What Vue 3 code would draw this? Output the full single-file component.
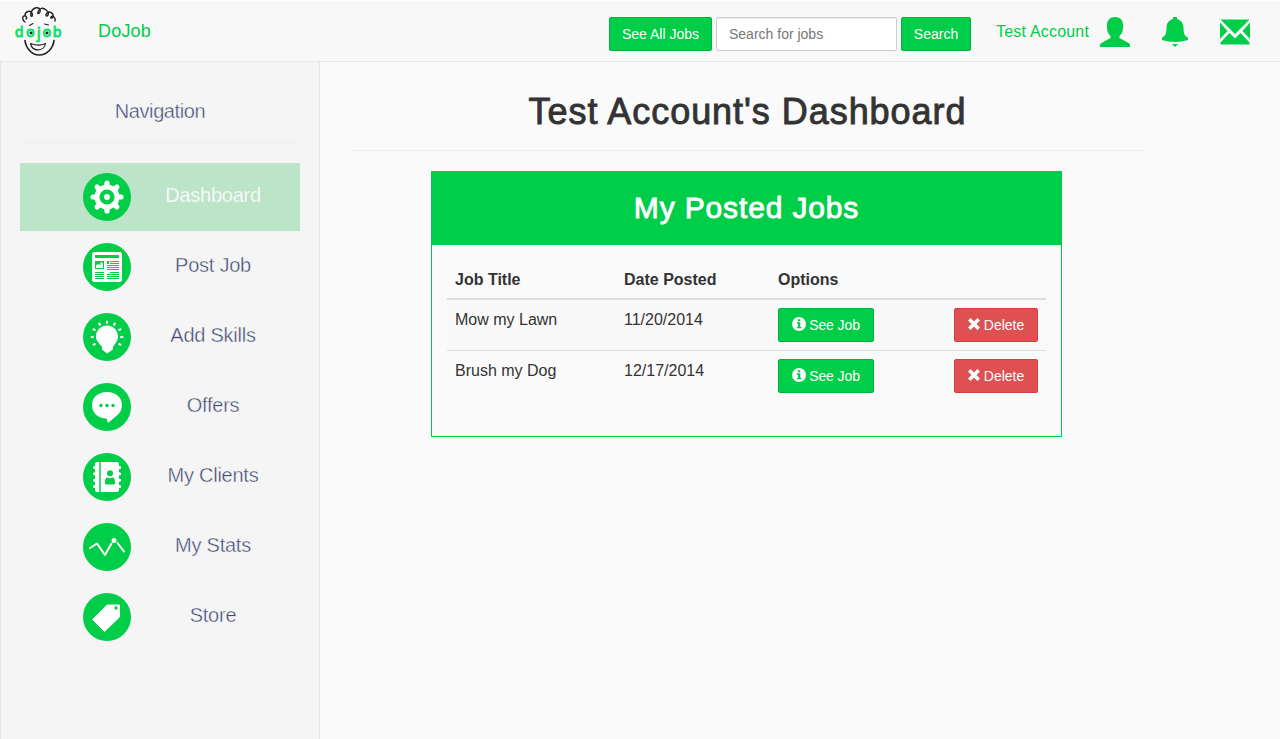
<script setup>
const navItems = [
  { label: 'Dashboard', icon: 'gear', active: true },
  { label: 'Post Job', icon: 'news' },
  { label: 'Add Skills', icon: 'bulb' },
  { label: 'Offers', icon: 'chat' },
  { label: 'My Clients', icon: 'contacts' },
  { label: 'My Stats', icon: 'stats' },
  { label: 'Store', icon: 'tag' },
]
const jobs = [
  { title: 'Mow my Lawn', date: '11/20/2014' },
  { title: 'Brush my Dog', date: '12/17/2014' },
]
const spokes = [0, 45, 90, 135, 180, 225, 270, 315]
const rays = [-120, -90, -60, -30, 0, 30, 60, 90, 120]
</script>

<template>
  <div class="page">
    <header class="navbar">
      <svg class="logo" viewBox="0 0 56 58" width="56" height="58">
        <g fill="none" stroke="#222" stroke-linecap="round" stroke-linejoin="round">
          <path stroke-width="1.4" d="M15 20c-3-2-3-7 0-6 2 0 2 3 1 3M15 14c0-5 5-6 7-3 1 2 0 4-1 3-1-2 0-6 4-8 4-1 6 1 5 4-1 2-3 2-2 0 1-4 5-5 8-2 3 2 3 5 1 6-2 0-1-3 2-4 3 0 5 3 4 5-1 2-3 1-2 0 2-2 5 1 4 4" />
          <path stroke-width="1.1" d="M19.500 23.500l3.500-2M34.500 22l4 1" />
          <path stroke-width="1.7" d="M15 38.500c1 8 7 14.500 14 14.500 8 0 14-6.500 15-14.500" />
          <path stroke-width="1.2" d="M20.500 41.500c5 2 11 2 15 0-1 8-13 9-15 0z" />
        </g>
        <g class="logo-text">
          <text x="5" y="35">d</text><text x="16.300" y="35">o</text>
          <text class="nose" x="27" y="36.500">j</text><text x="32.800" y="35">o</text><text x="43" y="35">b</text>
        </g>
        <circle cx="21" cy="31" r="1.400" fill="#222" /><circle cx="37" cy="31" r="1.400" fill="#222" />
      </svg>
      <a class="brand">DoJob</a>
      <div class="search">
        <button class="btn all">See All Jobs</button>
        <input placeholder="Search for jobs" />
        <button class="btn go">Search</button>
      </div>
      <a class="account">Test Account</a>
      <svg class="user" viewBox="0 0 30 30" width="30" height="30" fill="#00cd48">
        <path d="M15 0c5 0 8 3 8 8v3c0 4-2 6.500-3.500 8v2L28.500 26q1.500 1 1.500 2v2H0v-2q0-1 1.500-2l9-5v-2C9 17.500 7 15 7 11V8c0-5 3-8 8-8z" />
      </svg>
      <svg class="bell" viewBox="0 0 26 30" width="26" height="30" fill="#00cd48">
        <path d="M11 0h4v2c4 1 6.500 4 6.500 9 0 5 1 8.500 4.500 9.500v2.500Q13 27 0 23v-2.500c3.500-1 4.500-4.500 4.500-9.500C4.500 6 7 3 11 2zM10 27h6l-3 3z" />
      </svg>
      <svg class="mail" viewBox="0 0 30 26" width="30" height="26" fill="#00cd48">
        <path d="M.5.500h29L15 15zM0 3.500l7.500 8.500L0 20zM30 3.500l-7.500 8.500L30 20zM.5 25.500v-2L9.500 14 15 19.500l5.500-5.500 9 9.500v2z" />
      </svg>
    </header>

    <div class="body">
      <aside class="sidebar">
        <h2>Navigation</h2>
        <nav>
          <a v-for="item in navItems" :key="item.label" class="item" :class="{ active: item.active }">
            <svg viewBox="-24 -24 48 48" width="48" height="48">
              <circle r="24" fill="#00cd48" />
              <g v-if="item.icon === 'gear'">
                <circle r="12.500" fill="#fff" />
                <path v-for="a in spokes" :key="a" d="M0-8V-14" stroke="#fff" stroke-width="5.200" stroke-linecap="round" :transform="`rotate(${a})`" />
                <circle r="5.300" fill="#fff" stroke="#00cd48" stroke-width="4.600" />
              </g>
              <g v-else-if="item.icon === 'news'">
                <rect x="-15" y="-15" width="30" height="30" rx="2.500" fill="#fff" />
                <path fill="#00cd48" d="M-12-12h24v3h-24zM-12-6h9v8h-9z" />
                <path fill="#fff" d="M-11 1v-2.500l2-1.500 2 1 2-2 1 1V1zM-6.500-4.500h2v2h-2z" />
                <path stroke="#00cd48" stroke-width="1" d="M0-5.500h12M0-3.500h12M0-1.500h12M0 .5h12M0 2.500h12M3 5.500h9M0 7.500h12M0 9.500h12M0 11.500h12M-12 5.500h9M-12 7.500h9M-12 9.500h9M-12 11.500h9" />
                <path fill="#00cd48" d="M0-6h2v3H0z" />
                <path fill="#fff" d="M2-6h1v3H2z" />
              </g>
              <g v-else-if="item.icon === 'bulb'" fill="#fff">
                <path d="M0-11.500c6.500 0 11 5 11 11 0 4.500-2.500 6.500-4.500 9.500-.8 1.300-.5 2-.5 3.500L0 16.500l-5-4c0-1.500.3-2.200-.5-3.500C-8 6-11 4-11-.5c0-6 4.500-11 11-11z" />
                <path v-for="a in rays" :key="a" d="M0-13.300v-3" stroke="#fff" stroke-width="2.200" :transform="`rotate(${a})`" />
              </g>
              <g v-else-if="item.icon === 'chat'">
                <path fill="#fff" d="M0-15c9 0 15 5.500 15 13C15 6 9 9 7 11L1 16l-1.500-4.500C-9 11.500-15 6-15-2c0-7.500 6-13 15-13z" />
                <g fill="#00cd48"><circle cx="-6" cy="-1.500" r="1.700" /><circle cy="-1.500" r="1.700" /><circle cx="6" cy="-1.500" r="1.700" /></g>
              </g>
              <g v-else-if="item.icon === 'contacts'">
                <rect x="-12" y="-15" width="24" height="30" rx="2" fill="#fff" />
                <path stroke="#fff" stroke-width="3" stroke-linecap="round" d="M-12.500-9.500h2M-12.500-3.200h2M-12.500 3.200h2M-12.500 9.500h2M11-9.500h1.700M11-3.200h1.700M11 3.200h1.700M11 9.500h1.700" />
                <path stroke="#00cd48" stroke-width="1.500" d="M-7-15v30" />
                <circle cx="3" cy="-3.800" r="3" fill="#00cd48" />
                <path fill="#00cd48" d="M0 .5q3 1.500 6 0c1.500.5 2 2 2 5.500q0 1.500-1.500 1.500h-7Q-2 7.500-2 6C-2 2.500-1.500 1 0 .5z" />
              </g>
              <g v-else-if="item.icon === 'stats'">
                <path fill="none" stroke="#fff" stroke-width="2" stroke-linecap="round" stroke-linejoin="round" d="M-17 1l7-4.500L-2 8 4.500-3.500M10.500-4L17 4.500" />
                <circle cx="7" cy="-6.500" r="2.500" fill="#fff" />
              </g>
              <g v-else>
                <path fill="#fff" stroke="#fff" stroke-linejoin="round" d="M0-12h12.500V0L-2.500 14.500-14.500 2.500z" />
                <circle cx="9" cy="-9" r="1.700" fill="#00cd48" />
              </g>
            </svg>
            <span>{{ item.label }}</span>
          </a>
        </nav>
      </aside>

      <main>
        <h1>Test Account's Dashboard</h1>
        <section class="panel">
          <h3>My Posted Jobs</h3>
          <div class="table">
            <div class="row head"><b>Job Title</b><b>Date Posted</b><b>Options</b></div>
            <div v-for="job in jobs" :key="job.title" class="row">
              <span>{{ job.title }}</span>
              <span>{{ job.date }}</span>
              <button class="btn see">
                <svg viewBox="0 0 14 14" width="14" height="14"><circle cx="7" cy="7" r="7" fill="#fff" /><path fill="#00cd48" d="M5.800 2.300h2.500v1.900H5.800zM4.800 5.300h3.500v4.600h1.200v1.400H4.800V9.900H6V6.700H4.800z" /></svg>
                See Job
              </button>
              <button class="btn danger">
                <svg viewBox="0 0 12 12" width="12" height="12"><path stroke="#fff" stroke-width="3.600" d="M1.300 1.300l9.400 9.400M10.700 1.300l-9.400 9.400" /></svg>
                Delete
              </button>
            </div>
          </div>
        </section>
      </main>
    </div>
  </div>
</template>

<style>
body { background: #fafafa; }
</style>

<style scoped>
* { box-sizing: border-box; }
.page { height: 739px; overflow: hidden; display: flex; flex-direction: column; font: 16px/20px "Liberation Sans", Arial, sans-serif; color: #333; background: #fafafa; }
.navbar { height: 62px; flex: none; display: flex; align-items: flex-start; background: #f8f8f8; border-top: 1px solid #fff; border-bottom: 1px solid #e7e7e7; color: #00cd48; }
.logo { margin: 1px 0 0 10px; }
.logo-text { font: 15px "Liberation Sans", sans-serif; fill: #13e06a; stroke: #13e06a; stroke-width: .9px; }
.nose { font-size: 16px; }
.brand { margin: 20px 0 0 32px; width: 54px; font-size: 18px; letter-spacing: .2px; white-space: nowrap; }
.search { display: flex; gap: 4px; margin: 16px 0 0 457px; }
.btn { height: 34px; padding: 0; border: 1px solid #00b43f; border-radius: 2px; background: #00cd48; color: #fff; font: 14px/20px "Liberation Sans", Arial, sans-serif; display: flex; align-items: center; justify-content: center; white-space: nowrap; }
.all { width: 103px; }
.go { width: 70px; }
input { width: 181px; height: 34px; padding: 0 12px; border: 1px solid #ccc; border-radius: 2px; background: #fff; box-shadow: inset 0 1px 1px rgba(0, 0, 0, .075); font: 14px "Liberation Sans", Arial, sans-serif; }
input::placeholder { color: #777; }
.account { margin: 21px 0 0 25px; width: 104px; letter-spacing: .2px; white-space: nowrap; }
.user { margin-top: 16px; }
.bell { margin: 16px 0 0 32px; }
.mail { margin: 18px 0 0 32px; }
.body { flex: 1; display: flex; }
.sidebar { width: 320px; padding: 0 19px; background: #f5f5f5; border-left: 1px solid #e5e5e5; border-right: 1px solid #e5e5e5; color: #40456f; font-size: 20px; }
.sidebar h2 { margin: 0 0 20px; height: 81px; padding-top: 39px; border-bottom: 1px solid #eee; text-align: center; font-size: 20px; font-weight: 400; letter-spacing: -.4px; -webkit-text-stroke: .4px #f5f5f5; }
nav { display: flex; flex-direction: column; gap: 2px; }
.item { height: 68px; padding: 0 5px 0 63px; display: flex; align-items: center; }
.item span { flex: 1; margin-top: -4px; text-align: center; letter-spacing: -.25px; -webkit-text-stroke: .4px #f5f5f5; }
.active { background: #bce4c9; color: #fff; }
.active span { -webkit-text-stroke: .25px #bce4c9; }
main { width: 855px; padding: 0 30px; }
h1 { margin: 0 0 20px; height: 89px; padding-top: 30px; border-bottom: 1px solid #eee; text-align: center; font-size: 36px; line-height: 40px; font-weight: 400; letter-spacing: .95px; -webkit-text-stroke: .9px #333; }
.panel { width: 631px; height: 266px; margin: 0 0 0 81px; border: 1px solid #00cd48; }
h3 { height: 73px; margin: 0; background: #00cd48; color: #fff; text-align: center; font-size: 30px; line-height: 72px; font-weight: 400; letter-spacing: .85px; -webkit-text-stroke: .9px #fff; }
.table { margin: 17px 15px 0; }
.row { display: grid; grid-template-columns: 169px 154px 176px 84px; align-items: start; padding: 8px; height: 51px; border-bottom: 1px solid #ddd; background: #f9f9f9; }
.row > span { line-height: 23px; }
.row:last-child { border: 0; background: none; }
.head { height: 38px; border-bottom-width: 2px; background: none; }
.see { width: 96px; letter-spacing: -.1px; }
.danger { width: 84px; border-color: #d43f3f; background: #de5052; }
.row svg { margin: -2px 4px 0 0; }
.see svg { margin-right: 3px; }
</style>
